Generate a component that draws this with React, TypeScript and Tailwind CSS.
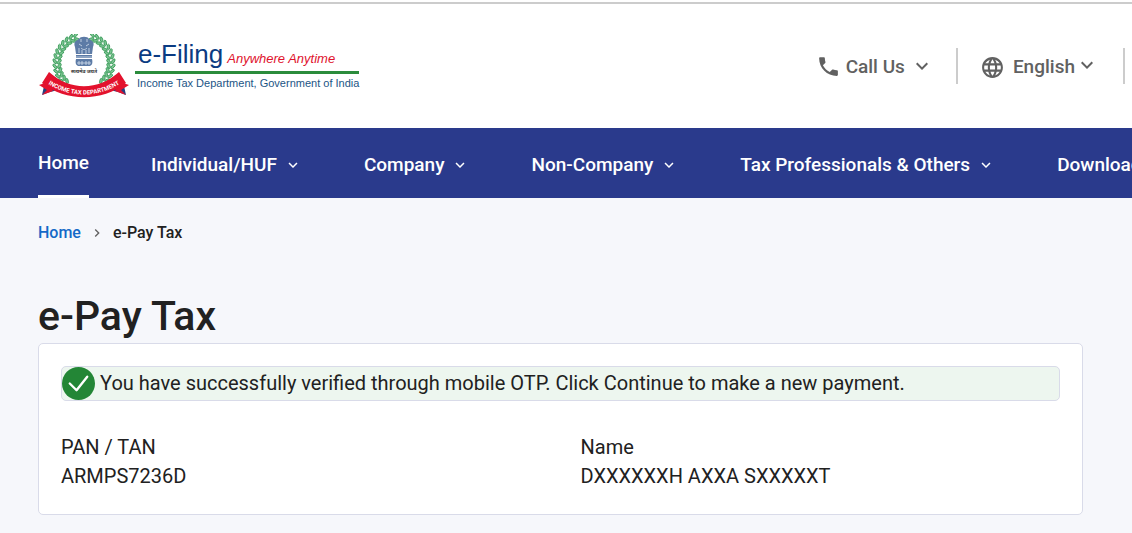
import { MdChevronRight, MdExpandMore, MdLanguage, MdPhone } from 'react-icons/md';

const menus = ['Individual/HUF', 'Company', 'Non-Company', 'Tax Professionals & Others', 'Downloads'];

const details = [
  { label: 'PAN / TAN', value: 'ARMPS7236D' },
  { label: 'Name', value: 'DXXXXXXH AXXA SXXXXXT' },
];

// leaves of the wreath, as angles in degrees from the top of the emblem
const leaves = [16, 26, 36, 46, 56, 66, 76, 86, 96, 106, 116, 126, 136];

function Emblem() {
  return (
    <svg viewBox="0 0 92 64" className="h-16 w-[92px] shrink-0" aria-label="Income Tax Department">
      <g fill="#7cc492" stroke="#2f9650" strokeWidth="0.8">
        {leaves.map((a) => (
          <g key={a}>
            <g transform={`translate(46 29) rotate(${a}) translate(0 -27)`}>
              <ellipse cx="-1" cy="-2" rx="2.8" ry="1.3" transform="rotate(35)" />
              <ellipse cx="-1" cy="2" rx="2.8" ry="1.3" transform="rotate(-35)" />
            </g>
            <g transform={`translate(46 29) rotate(${-a}) translate(0 -27)`}>
              <ellipse cx="1" cy="-2" rx="2.8" ry="1.3" transform="rotate(-35)" />
              <ellipse cx="1" cy="2" rx="2.8" ry="1.3" transform="rotate(35)" />
            </g>
          </g>
        ))}
      </g>
      {/* lion capital */}
      <g fill="#5d7ba6">
        <path d="M41 5c1-3 9-3 10 0l3 2c2 1 2 4 1 6l-1 7H38l-1-7c-1-2-1-5 1-6z" />
        <path d="M38 21h16v3H38z" />
        <path d="M38 25h16c1 4 0 6-2 7H40c-2-1-3-3-2-7z" />
      </g>
      <g fill="none" stroke="#d7e2ef" strokeWidth="0.8">
        <path d="M43 5v3m6-3v3M41 10l3 2m7-2-3 2M43 14c2 2 4 2 6 0M41 14v5m3-3v4m4-4v4m3-6v5M38 23h16" />
        <path d="M41 27v4m3-4v4m4-4v4m3-4v4M39 29h14" />
      </g>
      <text x="46" y="39" textAnchor="middle" fontSize="5" fontWeight="700" fill="#333" className="font-['Noto_Sans',sans-serif]">
        सत्यमेव जयते
      </text>
      <path d="M4 61l8-3 8-2-2-9-12 5z" fill="#26407f" />
      <path d="M88 61l-8-3-8-2 2-9 12 5z" fill="#26407f" />
      <path d="M4 61l5-5-8-5 9-3 5 9zM88 61l-5-5 8-5-9-3-5 9z" fill="#e3122d" />
      <path d="M11 38C32 57 60 57 81 38l7 11C64 68 28 68 4 49z" fill="#e3122d" />
      <path id="ribbon" d="M6 47C30 65 62 65 86 47" fill="none" />
      <text fontSize="6" fontWeight="700" fill="#fff" className="font-[Roboto,sans-serif]">
        <textPath href="#ribbon" startOffset="50%" textAnchor="middle">
          INCOME TAX DEPARTMENT
        </textPath>
      </text>
    </svg>
  );
}

function Logo() {
  return (
    <a href="#" className="flex items-center gap-[5px] font-['Liberation_Sans',sans-serif] whitespace-nowrap">
      <Emblem />
      <span className="block">
        <span className="flex items-baseline gap-1 border-b-[3px] border-[#2b8c3c] px-[3px] pt-[2px] leading-6">
          <span className="text-[26px] text-[#0b3b82]">e-Filing</span>
          <span className="text-[13px] text-[#e0122c] italic">Anywhere Anytime</span>
        </span>
        <span className="block pl-[2px] text-[11px] leading-[18px] text-[#1c5585]">
          Income Tax Department, Government of India
        </span>
      </span>
    </a>
  );
}

export default function App() {
  return (
    <div className="min-h-screen overflow-x-hidden bg-[#f6f7fb] font-[Roboto,sans-serif] text-[#212121]">
      <header className="bg-white pt-[2px]">
        <div className="flex h-[126px] items-center justify-between border-t-2 border-[#cccccc] pr-[7px] pl-[38px]">
          <Logo />
          <div className="flex items-center text-[19px] font-medium text-[#616161]">
            <button className="flex items-center gap-[5px]">
              <MdPhone size={25} />
              <span className="pt-[2px]">Call Us</span>
              <MdExpandMore size={24} />
            </button>
            <span className="mr-[22px] ml-[22px] h-9 w-[2px] bg-[#cccccc]" />
            <button className="flex items-center gap-2 pt-[2px]">
              <MdLanguage size={25} />
              <span className="flex items-center">
                English
                <MdExpandMore size={24} className="mb-1" />
              </span>
            </button>
            <span className="ml-6 h-9 w-[2px] bg-[#cccccc]" />
          </div>
        </div>
        <nav className="flex h-[70px] gap-[62px] bg-[#2a3a8c] pl-[38px] text-[19px] font-medium whitespace-nowrap text-white">
          <a href="#" className="flex items-center border-b-[3px] border-white pt-1">
            Home
          </a>
          {menus.map((menu) => (
            <button key={menu} className="flex items-center gap-[7px] pt-1">
              {menu}
              <MdExpandMore size={18} />
            </button>
          ))}
        </nav>
      </header>

      <main className="pr-[49px] pl-[38px]">
        <nav className="flex items-center gap-2 pt-[23px] text-base font-medium">
          <a href="#" className="text-[#1469c7]">
            Home
          </a>
          <MdChevronRight size={16} className="text-[#616161]" />
          <span>e-Pay Tax</span>
        </nav>

        <h1 className="mt-[47px] text-[41px] leading-[48px] font-medium">e-Pay Tax</h1>

        <section className="mt-[3px] rounded-[5px] border border-[#d9dbe9] bg-white px-[22px] pt-[22px] pb-[23px]">
          <div role="status" className="flex items-center gap-[5px] rounded-[5px] border border-[#d9dbe9] bg-[#edf6ef] text-xl">
            <svg viewBox="0 0 34 34" className="size-[33px] shrink-0" aria-hidden="true">
              <circle cx="17" cy="17" r="17" fill="#238636" />
              <path d="M8 17l7 7 11-14" fill="none" stroke="#fff" strokeWidth="2.4" strokeLinecap="round" strokeLinejoin="round" />
            </svg>
            <span className="pb-[2px]">
              You have successfully verified through mobile OTP. Click Continue to make a new payment.
            </span>
          </div>
          <dl className="mt-8 grid grid-cols-2 gap-x-10 text-xl leading-[29px]">
            {details.map((item) => (
              <div key={item.label}>
                <dt>{item.label}</dt>
                <dd>{item.value}</dd>
              </div>
            ))}
          </dl>
        </section>
      </main>
    </div>
  );
}
